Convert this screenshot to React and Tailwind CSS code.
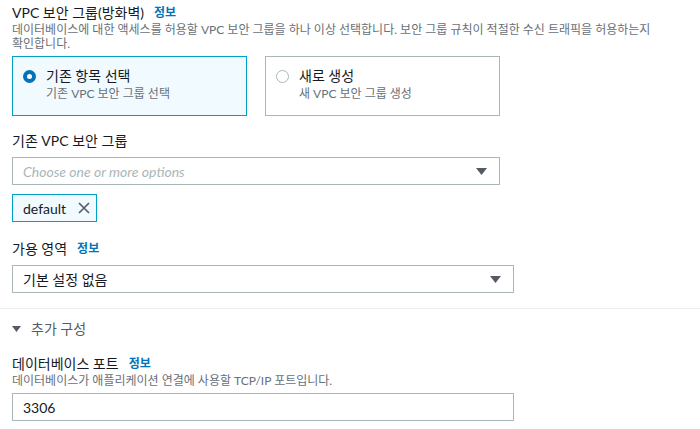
import React from "react";

const font = { fontFamily: 'Lato, "Noto Sans CJK KR", sans-serif' };

const Caret = () => (
  <svg width="11" height="7" viewBox="0 0 11 7" className="shrink-0">
    <path d="M0 0 H11 L5.5 7 Z" fill="#545b64" />
  </svg>
);

const Info = () => <span className="ml-[10px] text-[12px] leading-[18px] font-bold text-[#0073bb]">정보</span>;

const RadioCard = ({ selected, title, sub }) => (
  <div
    className={
      selected
        ? "flex w-[235px] h-[60px] items-start border border-[#00a1c9] bg-[#f1faff] pl-[10px] pt-[10px]"
        : "flex w-[235px] h-[60px] items-start border border-[#aab7b8] bg-white pl-[10px] pt-[10px]"
    }
  >
    <div
      className={
        selected
          ? "mt-[3px] h-[13px] w-[13px] shrink-0 rounded-full border-[4px] border-[#0073bb] bg-white"
          : "mt-[3px] h-[13px] w-[13px] shrink-0 rounded-full border border-[#aab7b8] bg-white"
      }
    />
    <div className="ml-[10px] flex flex-col">
      <span className="h-[18px] text-[14px] leading-[18px] text-[#16191f]">{title}</span>
      <span className="mt-[1px] h-[15px] text-[12px] leading-[15px] text-[#687078]">{sub}</span>
    </div>
  </div>
);

export default function App() {
  return (
    <div className="w-[700px] h-[429px] overflow-hidden bg-white" style={font}>
      <div className="px-3 pt-[4px]">
        {/* VPC security group */}
        <div className="flex h-[18px] items-center text-[14px] leading-[18px] text-[#16191f]">
          VPC 보안 그룹(방화벽)
          <Info />
        </div>
        <p className="mt-[1px] h-[28px] w-[650px] break-keep text-[12px] leading-[14px] text-[#687078]">
          데이터베이스에 대한 액세스를 허용할 VPC 보안 그룹을 하나 이상 선택합니다. 보안 그룹 규칙이 적절한 수신 트래픽을 허용하는지 확인합니다.
        </p>
        <div className="mt-[5px] flex gap-[18px]">
          <RadioCard selected title="기존 항목 선택" sub="기존 VPC 보안 그룹 선택" />
          <RadioCard title="새로 생성" sub="새 VPC 보안 그룹 생성" />
        </div>

        <div className="mt-[16px] h-[18px] text-[14px] leading-[18px] text-[#16191f]">기존 VPC 보안 그룹</div>
        <div className="mt-[7px] flex h-[28px] w-[488px] items-center justify-between border border-[#aab7b8] pl-[10px] pr-[12px]">
          <span className="text-[14px] italic text-[#aab7b8]">Choose one or more options</span>
          <Caret />
        </div>
        <div className="mt-[9px] flex h-[28px] w-[85px] items-center gap-[12px] border border-[#00a1c9] bg-[#f1faff] pl-[10px]">
          <span className="text-[14px] text-[#16191f]">default</span>
          <svg width="12" height="12" viewBox="0 0 12 12">
            <path d="M1 1 L11 11 M11 1 L1 11" stroke="#545b64" strokeWidth="1.6" />
          </svg>
        </div>

        <div className="mt-[18px] flex h-[18px] items-center text-[14px] leading-[18px] text-[#16191f]">
          가용 영역
          <Info />
        </div>
        <div className="mt-[7px] flex h-[28px] w-[502px] items-center justify-between border border-[#aab7b8] pl-[10px] pr-[12px]">
          <span className="text-[14px] text-[#16191f]">기본 설정 없음</span>
          <Caret />
        </div>
      </div>

      <div className="mt-[15px] h-px w-full bg-[#eaeded]" />

      <div className="px-3">
        <div className="mt-[11px] flex h-[18px] items-center text-[14px] leading-[18px] text-[#545b64]">
          <svg width="9" height="6" viewBox="0 0 9 6" className="mr-[10px]">
            <path d="M0 0 H9 L4.5 6 Z" fill="#545b64" />
          </svg>
          추가 구성
        </div>

        <div className="mt-[17px] flex h-[18px] items-center text-[14px] leading-[18px] text-[#16191f]">
          데이터베이스 포트
          <Info />
        </div>
        <div className="mt-[1px] h-[14px] text-[12px] leading-[14px] text-[#687078]">
          데이터베이스가 애플리케이션 연결에 사용할 TCP/IP 포트입니다.
        </div>
        <div className="mt-[5px] flex h-[28px] w-[502px] items-center border border-[#aab7b8] pl-[10px]">
          <span className="text-[14px] text-[#16191f]">3306</span>
        </div>
      </div>
    </div>
  );
}
